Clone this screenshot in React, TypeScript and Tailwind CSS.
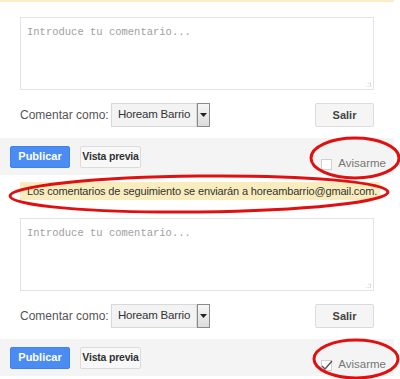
import React from "react";

const sans = { fontFamily: '"Liberation Sans", Arial, sans-serif' };

function CommentBox({ checked }: { checked: boolean }) {
  return (
    <div className="w-[394px] whitespace-nowrap" style={sans}>
      <div className="px-5">
        <div className="relative h-[73px] border border-[#e3e3e3] bg-white">
          <span
            className="absolute left-[6px] top-[7px] text-[10.5px] text-[#a0a0a0]"
            style={{ fontFamily: '"Liberation Mono", "Courier New", monospace' }}
          >
            Introduce tu comentario...
          </span>
          <span className="absolute bottom-[1px] right-[2px] text-[7px] leading-none text-[#bbb]">
            .:i
          </span>
        </div>
        <div className="mt-[13px] flex h-[24px] items-center">
          <span className="w-[91px] text-[12px] text-[#555]">Comentar como:</span>
          <div className="flex h-[24px]">
            <div className="flex w-[86px] items-center justify-center border border-[#d8d8d8] bg-[#f3f3f3] text-[11.5px] tracking-[-0.2px] text-[#333]">
              Hoream Barrio
            </div>
            <div className="flex w-[13px] items-center justify-center border border-[#8a8a8a] bg-gradient-to-b from-[#f6f6f6] to-[#dcdcdc]">
              <svg width="7" height="4" viewBox="0 0 7 4">
                <path d="M0 0h7L3.5 4z" fill="#222" />
              </svg>
            </div>
          </div>
          <div className="ml-auto flex h-[24px] w-[59px] items-center justify-center rounded-[2px] border border-[#dcdcdc] bg-[#f5f5f5] text-[11px] font-bold text-[#444]">
            Salir
          </div>
        </div>
      </div>
      <div className="mt-[11px] flex h-[37px] items-center bg-[#f4f4f4] pl-[10px] pr-[8px]">
        <div className="flex h-[22px] w-[60px] items-center justify-center rounded-[2px] border border-[#3d82ee] bg-[#4a8cf2] text-[11px] font-bold text-white">
          Publicar
        </div>
        <div className="ml-[10px] flex h-[22px] w-[61px] items-center justify-center rounded-[2px] border border-[#dcdcdc] bg-[#f8f8f8] text-[10.5px] font-bold tracking-[-0.2px] text-[#333]">
          Vista previa
        </div>
        <div className="ml-auto mt-[15px] flex items-center">
          <div className="relative h-[11px] w-[11px] border border-[#d0d0d0] bg-white">
            {checked && (
              <svg className="absolute -left-[2px] -top-[3px]" width="14" height="14" viewBox="0 0 14 14">
                <path d="M2 8l3 3L12 3" fill="none" stroke="#555" strokeWidth="1.4" />
              </svg>
            )}
          </div>
          <span className="ml-[6px] text-[11.5px] text-[#777]">Avisarme</span>
        </div>
      </div>
    </div>
  );
}

export default function App() {
  return (
    <div className="relative h-[379px] w-[400px] overflow-hidden bg-white">
      <div className="h-[2px] w-[394px] bg-[#f9eec8]" />
      <div className="pt-[15px]">
        <CommentBox checked={false} />
      </div>
      <div className="pl-[20px] pt-[7px]" style={sans}>
        <div className="flex h-[18px] w-[360px] items-center whitespace-nowrap bg-[#f9edbe] pl-[7px] text-[11px] tracking-[-0.15px] text-[#333]">
          Los comentarios de seguimiento se enviarán a horeambarrio@gmail.com.
        </div>
      </div>
      <div className="pt-[18px]">
        <CommentBox checked={true} />
      </div>
      <svg className="pointer-events-none absolute left-0 top-0" width="400" height="379">
        <g fill="none" stroke="#e01010" strokeWidth="3">
          <ellipse cx="355" cy="158" rx="44" ry="20" />
          <ellipse cx="199" cy="194" rx="189" ry="18" transform="rotate(-0.6 199 194)" />
          <ellipse cx="356" cy="359" rx="42" ry="19" />
        </g>
      </svg>
    </div>
  );
}
